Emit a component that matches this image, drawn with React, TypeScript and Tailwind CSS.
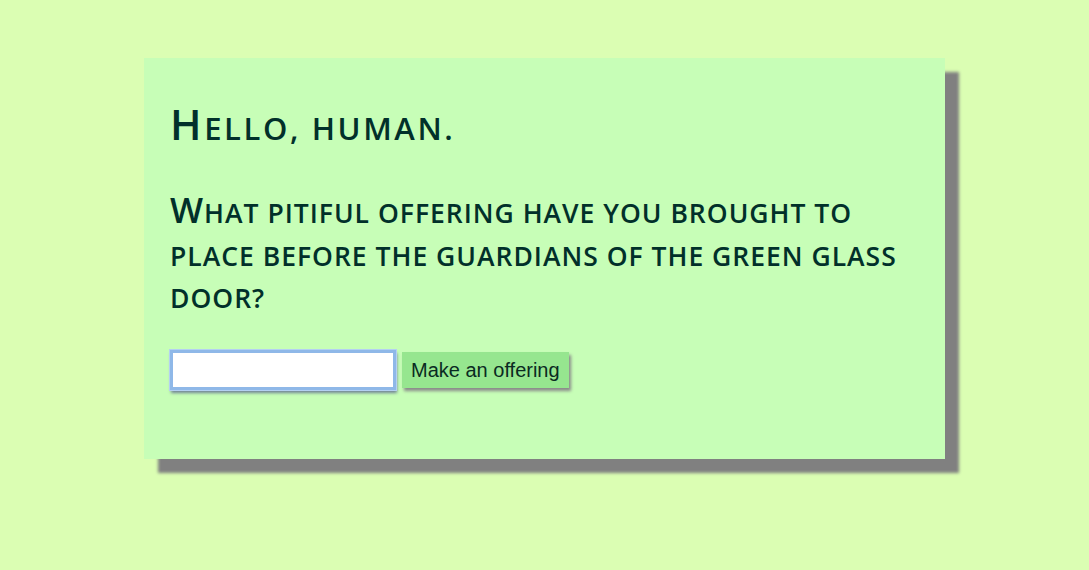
import React from 'react';

const font = { fontFamily: '"Open Sans", sans-serif' };

export default function App() {
  return (
    <div className="min-h-[570px] w-full bg-[#dbfeb3] pt-[58px]">
      <div className="mx-auto w-[801px] h-[401px] bg-[#c7feb7] px-[26px] pt-[42px] text-[#01302a] shadow-[14px_14px_3px_#808080]" style={font}>
        <h1 className="uppercase font-semibold text-[31px] leading-[56px] tracking-[2.6px]">
          <span className="text-[42px] leading-[0]">H</span>ello, human.
        </h1>
        <p className="mt-[36px] uppercase font-semibold text-[26.5px] leading-[42.5px] tracking-[1px]">
          <span className="text-[35px] leading-[0]">W</span>hat pitiful offering have you brought to place before the guardians of the green glass door?
        </p>
        <form className="mt-[30px] flex items-center gap-[6px]" onSubmit={(e) => e.preventDefault()}>
          <input
            type="text"
            className="h-[40px] w-[226px] bg-white border-[3px] border-[#8fb8e8] outline-none shadow-[0_0_0_1px_#b4d0f2,1px_3px_3px_#6f8196]"
          />
          <button
            type="submit"
            className="h-[36px] px-[9px] bg-[#96e68f] text-[20px] text-[#0a2a22] shadow-[2px_3px_3px_#8a8a8a]"
            style={{ fontFamily: '"Liberation Sans", Arial, sans-serif' }}
          >
            Make an offering
          </button>
        </form>
      </div>
    </div>
  );
}
